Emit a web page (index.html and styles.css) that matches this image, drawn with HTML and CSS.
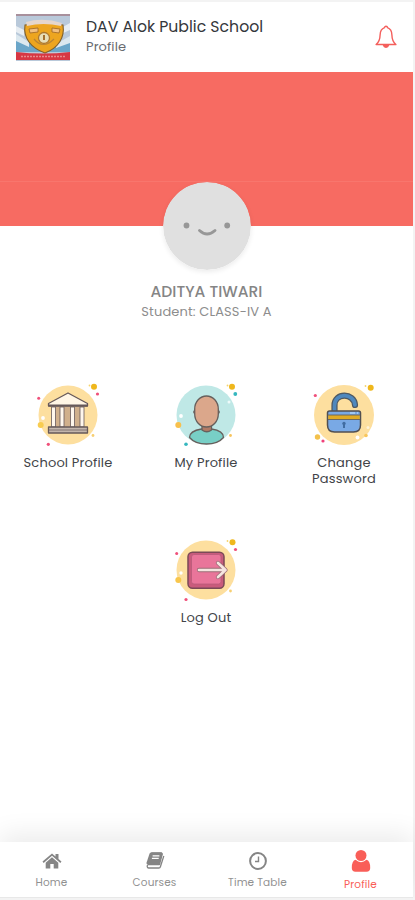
FILE: index.html
```html
<!DOCTYPE html>
<html lang="en">
<head>
<meta charset="utf-8">
<meta name="viewport" content="width=device-width">
<title>DAV Alok Public School - Profile</title>
<link rel="stylesheet" href="styles.css">
</head>
<body>
<div class="app">
  <header class="header">
    <svg class="logo" viewBox="0 0 54 47">
      <rect width="54" height="47" fill="#b9c9da"/>
      <path d="M0 0h54v2H0z" fill="#a8909c"/>
      <path d="M0 12l8 4v6l-8-4zM54 9l-9 5v6l9-4z" fill="#e7edf2"/>
      <path d="M0 27h54v11H0z" fill="#6ba6c9"/>
      <path d="M0 20l13 8v5L0 27zM54 22L40 30v4l14-5z" fill="#dce8ef"/>
      <path d="M9 11Q27 7 47 11C49 24 42 34 29 39 15 34 7 24 9 11Z" fill="#eda51f" stroke="#80602b" stroke-width="1.100"/>
      <path d="M10 8Q27 3 46 9l-1 3Q27 8 11 12z" fill="#e6d6cb"/>
      <path d="M13 15l9-1v4l-8 1zM36 14l8 1-1 4-7-1z" fill="#f2c080" stroke="#9c6425" stroke-width=".8"/>
      <circle cx="28" cy="24" r="5.500" fill="#e8dfb9" stroke="#ad7931" stroke-width="1.300"/>
      <path d="M28 21v5" fill="none" stroke="#a4702e" stroke-width="2"/>
      <path d="M18 25q9 11 20 0" fill="none" stroke="#b98434" stroke-width="1.200"/>
      <path d="M0 38q27 3 54 0v8H0z" fill="#d73743"/>
      <path d="M5 42.500h44" stroke="#e88a8c" stroke-width="1.600" stroke-dasharray="2 1"/>
    </svg>
    <div class="heading">
      <h1 class="school">DAV Alok Public School</h1>
      <p class="page">Profile</p>
    </div>
    <svg class="bell" viewBox="0 0 24 24" fill="none" stroke="#f45f5c" stroke-width="1.400" stroke-linejoin="round">
      <path d="M10.500 2.700a1.500 1.500 0 0 1 3 0C17 4 17.800 6.500 17.900 10c.1 4.300 1 7.200 4 9.500H2.100c3-2.300 3.900-5.200 4-9.500C6.200 6.500 7 4 10.500 2.700z"/>
      <path d="M9.500 20.300a2.600 2.600 0 0 0 5 0z" fill="#f45f5c"/>
    </svg>
  </header>
  <div class="banner"></div>
  <section class="person">
    <svg class="avatar" viewBox="0 0 88 88">
      <circle cx="44" cy="44" r="44" fill="#e0e0e0"/>
      <circle cx="23.500" cy="43.500" r="2.900" fill="#979797"/>
      <circle cx="64.200" cy="43.500" r="2.900" fill="#979797"/>
      <path d="M36.500 48.500q7.500 7 15.500 0" fill="none" stroke="#979797" stroke-width="2.900" stroke-linecap="round"/>
    </svg>
    <h2 class="name">ADITYA TIWARI</h2>
    <p class="class">Student: CLASS-IV A</p>
  </section>
  <main class="menu">
    <a class="item">
      <svg class="art" viewBox="0 0 80 80">
        <circle cx="40" cy="40" r="29.500" fill="#fddf9f"/>
        <circle cx="66" cy="11.700" r="3" fill="#efb71c"/><circle cx="61.500" cy="10.500" r=".9" fill="#f7d36a"/>
        <circle cx="69.500" cy="19" r="1.600" fill="#f0507a"/><circle cx="10.700" cy="23.300" r="1.500" fill="#f0507a"/>
        <circle cx="12.700" cy="50" r="3" fill="#f8cc50"/><circle cx="15" cy="43" r="1.900" fill="#fff"/>
        <circle cx="20.300" cy="69.300" r="1.600" fill="#f0507a"/><circle cx="65" cy="60.500" r="1.400" fill="#f7cf72"/>
        <g stroke="#66595a" stroke-width="1.300" stroke-linejoin="round">
          <path d="M20.500 28.500L40 18l19.500 10.500v2.500h-39z" fill="#fff6e6"/>
          <path d="M24 32h32v20H24z" fill="#d0b08c" stroke="none"/>
          <path d="M23.500 32h4v20h-4zM32 32h4v20h-4zM42.500 32h4v20h-4zM52 32h4v20h-4z" fill="#fff7ec" stroke-width=".8"/>
          <path d="M20.500 52h39v6h-39z" fill="#c3b6ac"/>
          <path d="M21 55h38" stroke-width=".7"/>
          <path d="M20.500 30.500h39" stroke-width="2.200"/>
        </g>
      </svg>
      <span class="label">School Profile</span>
    </a>
    <a class="item">
      <svg class="art" viewBox="0 0 80 80">
        <circle cx="40" cy="40" r="29.500" fill="#bfe8e6"/>
        <circle cx="66" cy="11.700" r="3" fill="#efb71c"/><circle cx="61.500" cy="10.500" r=".9" fill="#f7d36a"/>
        <circle cx="69.300" cy="19" r="1.900" fill="#35b7bf"/><circle cx="63" cy="27" r="1.500" fill="#eefafa"/>
        <circle cx="12.300" cy="50" r="3" fill="#f8c04c"/><circle cx="15" cy="41" r="1.900" fill="#fff"/>
        <circle cx="20" cy="69.300" r="1.800" fill="#35b7bf"/><circle cx="64.500" cy="60.500" r="1.400" fill="#f7c45d"/>
        <g stroke="#67605d" stroke-width="1.300">
          <path d="M23.500 62.500c0-5 6-7.500 12-8.500h10c7 1 12 3.500 12 8.500Q52 69 40.500 69T23.500 62.500z" fill="#78cfc6"/>
          <path d="M36 49h9.500v6q-4.700 3.500-9.500 0z" fill="#b17b66"/>
          <ellipse cx="40.500" cy="37" rx="12.700" ry="4" fill="#dba78b"/>
          <rect x="28.700" y="21" width="23.600" height="31" rx="11.800" ry="13" fill="#dba78b"/>
        </g>
      </svg>
      <span class="label">My Profile</span>
    </a>
    <a class="item">
      <svg class="art" viewBox="0 0 80 80">
        <circle cx="40" cy="40" r="30" fill="#fddf9f"/>
        <circle cx="66.700" cy="12.700" r="3" fill="#efb71c"/><circle cx="61.500" cy="11" r=".9" fill="#f7d36a"/>
        <circle cx="11.300" cy="20.500" r="1.600" fill="#f0507a"/><circle cx="13.500" cy="62" r="2.700" fill="#f3c14c"/>
        <circle cx="19" cy="66" r="1.600" fill="#f0407a"/><circle cx="53.500" cy="62.500" r="1.900" fill="#fff"/>
        <circle cx="62" cy="60.500" r="1.800" fill="#f8c65b"/><circle cx="64" cy="52.500" r="1.500" fill="#fff3d8"/>
        <path d="M30.500 36V30.500c0-13 19.500-13 20.500-.5" fill="none" stroke="#4f5962" stroke-width="6.200" stroke-linecap="round"/>
        <path d="M30.500 37V30.500c0-13 19.500-13 20.500-.5" fill="none" stroke="#4f88bd" stroke-width="3.700" stroke-linecap="round"/>
        <path d="M25.500 36h29q2 0 2 2v12q0 7-7 7h-19q-7 0-7-7V38q0-2 2-2z" fill="#79a9e5" stroke="#514f51" stroke-width="1.500"/>
        <path d="M24.200 40h31.600v4.500H24.200z" fill="#e0aa24"/>
        <path d="M24 40h32M24 44.500h32" stroke="#65605a" stroke-width=".9"/>
        <path d="M46 38h5M53 38h1" stroke="#c8e8ff" stroke-width="1.200"/>
        <circle cx="40" cy="48.500" r="1.700" fill="#416da2"/><path d="M40 48v5" stroke="#416da2" stroke-width="2"/>
      </svg>
      <span class="label">Change Password</span>
    </a>
    <a class="item item-last">
      <svg class="art" viewBox="0 0 80 80">
        <circle cx="40" cy="40" r="29.500" fill="#fddf9f"/>
        <circle cx="66.500" cy="12.300" r="3" fill="#efb71c"/><circle cx="61.500" cy="11" r=".9" fill="#f7d36a"/>
        <circle cx="69.500" cy="19.500" r="1.600" fill="#f0507a"/><circle cx="10.700" cy="23.500" r="1.500" fill="#f0507a"/>
        <circle cx="12.300" cy="50" r="3" fill="#f8c64c"/><circle cx="15" cy="43" r="1.700" fill="#fff"/>
        <circle cx="20" cy="69.500" r="1.600" fill="#f0507a"/><circle cx="64.500" cy="61" r="1.400" fill="#f7cf72"/>
        <rect x="22" y="22.200" width="36" height="36" rx="4.500" fill="#c95b7c" stroke="#7b4a57" stroke-width="1.500"/>
        <rect x="25.500" y="24.500" width="29.500" height="29.500" rx="2.500" fill="#e9759a" stroke="#b95a7a" stroke-width=".8"/>
        <path d="M33 40h25M52 33l7.500 7-7.500 7" fill="none" stroke="#9b6b76" stroke-width="4.300" stroke-linecap="round" stroke-linejoin="round"/>
        <path d="M33 40h25M52 33l7.500 7-7.500 7" fill="none" stroke="#f5e5e0" stroke-width="2.700" stroke-linecap="round" stroke-linejoin="round"/>
      </svg>
      <span class="label">Log Out</span>
    </a>
  </main>
  <nav class="nav">
    <a class="tab">
      <svg class="icon" viewBox="0 0 20 20" fill="#858585"><path d="M10 2.500l3.500 3V3h3v5l3 2.600-1.200 1.300L10 4.800l-8.300 7.100L.5 10.600z"/><path d="M10 6.300l6.300 5.400V17.500h-4.600v-4.500H8.300v4.500H3.700v-5.800z"/></svg>
      <span class="tab-label">Home</span>
    </a>
    <a class="tab">
      <svg class="icon" viewBox="0 0 20 20"><path d="M6.300 2h9.700q1.500.2 1.100 1.700L14.400 13.500H3.500Q1.900 14 2.200 15.700q.2 1.300 1.400 1.300h10.200q1.200 0 1.600-1.300L18.800 5" fill="none" stroke="#858585" stroke-width="1.300" stroke-linejoin="round"/><path d="M6.300 1.500h10q1.500.2 1.100 1.700L14.500 13.500H2.700Q1 13.500 1.700 11.300L4.500 2.800Q5 1.500 6.300 1.500z" fill="#858585"/><path d="M7.600 4.800h6.800M6.900 7.300h6.800" stroke="#fff" stroke-width="1.200"/></svg>
      <span class="tab-label">Courses</span>
    </a>
    <a class="tab">
      <svg class="icon" viewBox="0 0 20 20" fill="none" stroke="#858585"><circle cx="10" cy="10" r="7.900" stroke-width="2"/><path d="M10.500 5.500v5H7" stroke-width="1.400"/></svg>
      <span class="tab-label">Time Table</span>
    </a>
    <a class="tab active">
      <svg class="icon user" viewBox="0 0 20 24" fill="#f95e58"><circle cx="10" cy="6.500" r="5.500"/><path d="M4.600 10.800Q7 13.200 10 13.200t5.400-2.400Q19.200 11.500 19.200 19q0 3.700-3.700 3.700h-11Q.8 22.700.8 19q0-7.500 3.800-8.200z"/></svg>
      <span class="tab-label">Profile</span>
    </a>
  </nav>
</div>
</body>
</html>
```
FILE: styles.css
```css
* { box-sizing: border-box; }
body { margin: 0; background: #f3f3f3; font-family: Poppins, Inter, "Liberation Sans", sans-serif; }
h1, h2, p { margin: 0; font-weight: 400; white-space: nowrap; }
svg { display: block; flex: none; }
.app { display: flex; flex-direction: column; width: 413px; height: 898px; border-top: 2px solid #f3f3f3; background: #fff; }
.header { display: flex; height: 70px; flex: none; padding: 12px 15px 0 16px; }
.logo { width: 54px; height: 47px; }
.heading { flex: 1; padding: 3px 0 0 16px; }
.school { color: #34373b; font-size: 15.700px; line-height: 20px; }
.page { color: #686b70; font-size: 13px; line-height: 20px; letter-spacing: .1px; }
.bell { width: 24px; height: 24px; margin-top: 11px; }
.banner { flex: none; height: 154px; background: linear-gradient(#f76b62 109px, #f8766d 109px, #f8766d 110px, #f76b62 110px); }
.person { display: flex; flex-direction: column; align-items: center; height: 148px; margin-top: -44px; flex: none; }
.avatar { width: 88px; height: 88px; border-radius: 50%; box-shadow: 0 2px 5px #00000014; }
.name { margin-top: 12px; color: #858585; font-size: 15.500px; font-weight: 500; line-height: 20px; }
.class { color: #8d8d8d; font-size: 13px; line-height: 20px; letter-spacing: .13px; }
.menu { display: grid; grid-template-columns: repeat(3, 138px); grid-auto-rows: 155px; flex: 1; padding-top: 45px; margin-left: -1px; }
.item { display: flex; flex-direction: column; align-items: center; }
.item-last { grid-column: 2; }
.art { width: 80px; height: 80px; }
.label { width: 96px; text-align: center; color: #424448; font-size: 13px; line-height: 16px; letter-spacing: .16px; }
.nav { display: grid; grid-template-columns: repeat(4, 103px); flex: none; height: 56px; background: #fff; box-shadow: 0 -8px 26px #00000014; border-bottom: 1px solid #e8e8e8; }
.tab { display: flex; flex-direction: column; align-items: center; padding-top: 9px; color: #919191; }
.icon { width: 20px; height: 20px; }
.tab-label { font-size: 10.500px; line-height: 14px; letter-spacing: .15px; margin-top: 5px; white-space: nowrap; }
.active { color: #f95e58; padding-top: 7px; }
.user { height: 24px; }
```
